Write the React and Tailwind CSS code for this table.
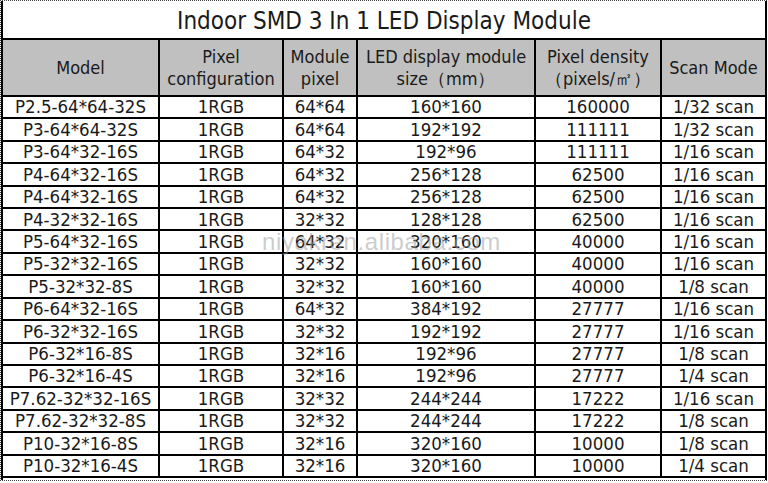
import React from "react";

const rows = [
  ["P2.5-64*64-32S", "1RGB", "64*64", "160*160", "160000", "1/32 scan"],
  ["P3-64*64-32S", "1RGB", "64*64", "192*192", "111111", "1/32 scan"],
  ["P3-64*32-16S", "1RGB", "64*32", "192*96", "111111", "1/16 scan"],
  ["P4-64*32-16S", "1RGB", "64*32", "256*128", "62500", "1/16 scan"],
  ["P4-64*32-16S", "1RGB", "64*32", "256*128", "62500", "1/16 scan"],
  ["P4-32*32-16S", "1RGB", "32*32", "128*128", "62500", "1/16 scan"],
  ["P5-64*32-16S", "1RGB", "64*32", "320*160", "40000", "1/16 scan"],
  ["P5-32*32-16S", "1RGB", "32*32", "160*160", "40000", "1/16 scan"],
  ["P5-32*32-8S", "1RGB", "32*32", "160*160", "40000", "1/8 scan"],
  ["P6-64*32-16S", "1RGB", "64*32", "384*192", "27777", "1/16 scan"],
  ["P6-32*32-16S", "1RGB", "32*32", "192*192", "27777", "1/16 scan"],
  ["P6-32*16-8S", "1RGB", "32*16", "192*96", "27777", "1/8 scan"],
  ["P6-32*16-4S", "1RGB", "32*16", "192*96", "27777", "1/4 scan"],
  ["P7.62-32*32-16S", "1RGB", "32*32", "244*244", "17222", "1/16 scan"],
  ["P7.62-32*32-8S", "1RGB", "32*32", "244*244", "17222", "1/8 scan"],
  ["P10-32*16-8S", "1RGB", "32*16", "320*160", "10000", "1/8 scan"],
  ["P10-32*16-4S", "1RGB", "32*16", "320*160", "10000", "1/4 scan"],
];

const headers = [
  ["Model"],
  ["Pixel", "configuration"],
  ["Module", "pixel"],
  ["LED display module", "size（mm）"],
  ["Pixel density", "（pixels/㎡）"],
  ["Scan Mode"],
];

const font = { fontFamily: '"DejaVu Sans Condensed", "DejaVu Sans", sans-serif' };

export default function App() {
  return (
    <div className="w-[768px] h-[483px] bg-white relative text-[#1a1a1a]" style={font}>
      <div className="w-[767px] h-[481px] border-l border-t border-b border-dotted border-[#444]">
        <div className="w-[766px] h-[479px] border-x-2 border-black">
          <div className="h-[37px] flex items-center justify-center text-[24px] leading-none pt-[2px]">
            Indoor SMD 3 In 1 LED Display Module
          </div>
          <div className="h-[440px] bg-black py-[2px] grid grid-cols-[155px_122px_72px_176px_124px_103px] grid-rows-[55px_repeat(17,1fr)] gap-[2px]">
            {headers.map((h, i) => (
              <div
                key={i}
                className="bg-[#c0c0c0] flex flex-col items-center justify-center text-[18px] leading-[22px]"
              >
                {h.map((line, j) => (
                  <span key={j} className="whitespace-nowrap">
                    {line}
                  </span>
                ))}
              </div>
            ))}
            {rows.map((r, i) =>
              r.map((cell, j) => (
                <div
                  key={i + "-" + j}
                  className="bg-white flex items-center justify-center text-[18.5px] leading-none whitespace-nowrap pt-[1px]"
                >
                  {cell}
                </div>
              ))
            )}
          </div>
        </div>
      </div>
      {/* watermark */}
      <div
        className="absolute left-[262px] top-[230px] text-[24px] tracking-[0.6px] leading-none text-[#9a9a9a]/50 pointer-events-none"
        style={{ fontFamily: '"Liberation Sans", Arial, sans-serif' }}
      >
        niyakren.alibaba.com
      </div>
    </div>
  );
}
